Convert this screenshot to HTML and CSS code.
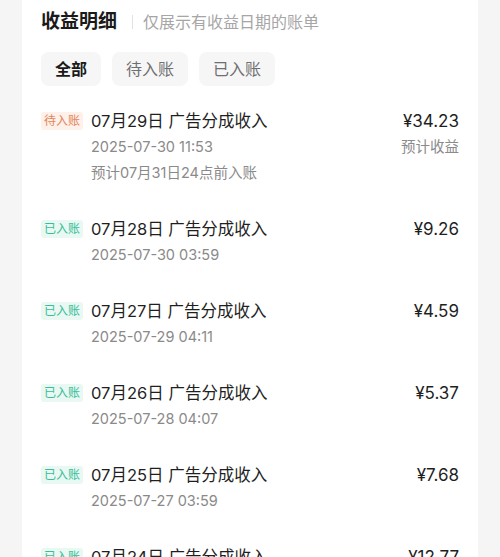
FILE: index.html
```html
<!DOCTYPE html>
<html lang="zh-CN">
<head>
<meta charset="utf-8">
<title>收益明细</title>
<link rel="stylesheet" href="styles.css">
</head>
<body>
<div class="card">
  <div class="header">
    <span class="title">收益明细</span>
    <span class="divider"></span>
    <span class="subtitle">仅展示有收益日期的账单</span>
  </div>
  <div class="tabs">
    <span class="tab active">全部</span>
    <span class="tab">待入账</span>
    <span class="tab">已入账</span>
  </div>
  <div class="list">
    <div class="row">
      <span class="badge pending">待入账</span>
      <div class="info">
        <div class="name">07月29日 广告分成收入</div>
        <div class="meta">2025-07-30 11:53</div>
        <div class="meta">预计07月31日24点前入账</div>
      </div>
      <div class="amount">
        <div class="money">¥34.23</div>
        <div class="meta">预计收益</div>
      </div>
    </div>
    <div class="row">
      <span class="badge done">已入账</span>
      <div class="info">
        <div class="name">07月28日 广告分成收入</div>
        <div class="meta">2025-07-30 03:59</div>
      </div>
      <div class="amount"><div class="money">¥9.26</div></div>
    </div>
    <div class="row">
      <span class="badge done">已入账</span>
      <div class="info">
        <div class="name">07月27日 广告分成收入</div>
        <div class="meta">2025-07-29 04:11</div>
      </div>
      <div class="amount"><div class="money">¥4.59</div></div>
    </div>
    <div class="row">
      <span class="badge done">已入账</span>
      <div class="info">
        <div class="name">07月26日 广告分成收入</div>
        <div class="meta">2025-07-28 04:07</div>
      </div>
      <div class="amount"><div class="money">¥5.37</div></div>
    </div>
    <div class="row">
      <span class="badge done">已入账</span>
      <div class="info">
        <div class="name">07月25日 广告分成收入</div>
        <div class="meta">2025-07-27 03:59</div>
      </div>
      <div class="amount"><div class="money">¥7.68</div></div>
    </div>
    <div class="row">
      <span class="badge done">已入账</span>
      <div class="info">
        <div class="name">07月24日 广告分成收入</div>
        <div class="meta">2025-07-26 04:02</div>
      </div>
      <div class="amount"><div class="money">¥12.77</div></div>
    </div>
  </div>
</div>
</body>
</html>
```
FILE: styles.css
```css
html, body {
  margin: 0;
  padding: 0;
  background: #f5f5f5;
  height: 100%;
  overflow: hidden;
}
body {
  font-family: Inter, "Noto Sans CJK SC", sans-serif;
  color: #1f1f1f;
}
.card {
  margin: 0 22px;
  background: #ffffff;
  padding: 8px 19px 0;
  min-height: 600px;
}
.header {
  display: flex;
  align-items: center;
  height: 28px;
}
.title {
  font-size: 19px;
  font-weight: 700;
  color: #1a1a1a;
  line-height: 28px;
}
.divider {
  width: 1px;
  height: 14px;
  background: #e2e2e2;
  margin: 0 10px 0 15px;
}
.subtitle {
  font-size: 16px;
  color: #a6a6a6;
  line-height: 28px;
}
.tabs {
  display: flex;
  gap: 11px;
  margin-top: 16px;
  margin-bottom: 7px;
}
.tab {
  height: 34px;
  line-height: 34px;
  padding: 0 14px;
  background: #f6f6f6;
  border-radius: 8px;
  font-size: 16px;
  color: #6f6f6f;
}
.tab.active {
  color: #1a1a1a;
  font-weight: 600;
}
.row {
  display: flex;
  align-items: flex-start;
  padding: 15px 0;
}
.badge {
  flex: none;
  height: 18px;
  line-height: 18px;
  margin-top: 4px;
  padding: 0 3px;
  font-size: 12px;
  border-radius: 3px;
  margin-right: 8px;
}
.badge.pending {
  color: #e4865a;
  background: #fdf1ea;
}
.badge.done {
  color: #38bf97;
  background: #e9f8f2;
}
.info {
  flex: 1;
}
.name {
  font-size: 16.5px;
  line-height: 26px;
  color: #1f1f1f;
}
.meta {
  font-size: 14.5px;
  line-height: 26px;
  color: #8a8a8a;
}
.amount {
  text-align: right;
}
.money {
  font-size: 17px;
  line-height: 26px;
  color: #1f1f1f;
  font-weight: 400;
}
```
